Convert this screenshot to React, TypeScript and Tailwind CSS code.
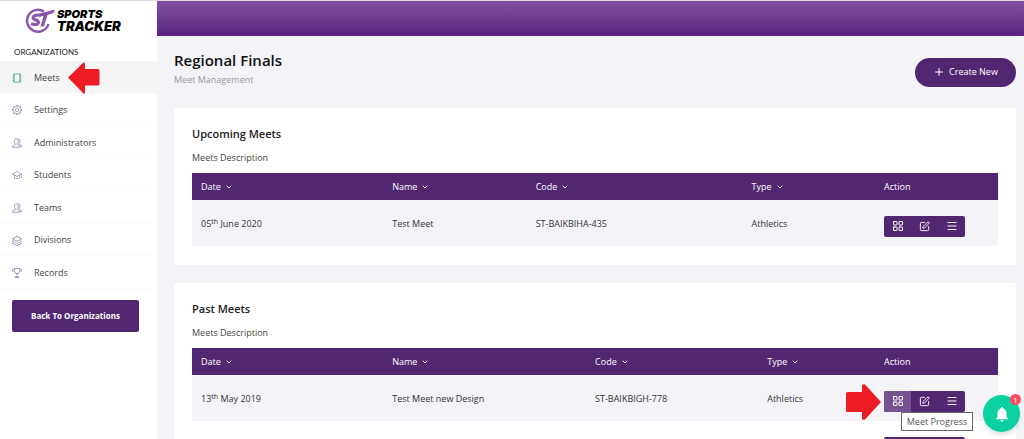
import type { ReactNode } from 'react'
import { ChevronDown, LayoutGrid, Menu, Plus, SquarePen } from 'lucide-react'
import { MdNotifications } from 'react-icons/md'
import { SlGraduation, SlLayers, SlSettings, SlTrophy } from 'react-icons/sl'

interface Meet {
  day: string
  suffix: string
  rest: string
  name: string
  code: string
  type: string
}

interface MeetsCardProps {
  title: string
  meets: Meet[]
  columns: string[]
  children?: ReactNode
}

const upcomingMeets: Meet[] = [
  { day: '05', suffix: 'th', rest: 'June 2020', name: 'Test Meet', code: 'ST-BAIKBIHA-435', type: 'Athletics' },
]

const pastMeets: Meet[] = [
  { day: '13', suffix: 'th', rest: 'May 2019', name: 'Test Meet new Design', code: 'ST-BAIKBIGH-778', type: 'Athletics' },
]

function NotebookIcon() {
  return (
    <svg viewBox="0 0 16 16" className="size-[10px]" fill="none" stroke="currentColor">
      <path d="M3 1.5h10M3 14.5h10" strokeWidth="1.4" />
      <path d="M3 1v14M13 1v14" strokeWidth="2" />
      <path d="M1 4h3M1 8h3M1 12h3M12 4h3M12 8h3M12 12h3" strokeWidth="1" />
    </svg>
  )
}

function PeopleIcon() {
  return (
    <svg viewBox="0 0 20 20" className="size-[10px]" fill="none" stroke="currentColor" strokeWidth="1.5" strokeLinejoin="round">
      <path d="M1 18.5h14v-2c0-1.500-3.500-2-4.500-3.200v-2c1.200-1 1.700-2.500 1.700-5C12.200 3 10.800 1.500 8.500 1.500S4.800 3 4.800 6.300c0 2.500.5 4 1.700 5v2C5.500 14.500 1 15 1 16.500z" />
      <path d="M12 1.500c2.500 0 3.800 1.500 3.800 4.500 0 2.300-.6 3.800-1.600 4.700v1.800c1 1.200 4.800 1.700 4.800 3.500v1h-3" />
    </svg>
  )
}

const menuItems = [
  { label: 'Meets', icon: <NotebookIcon />, active: true },
  { label: 'Settings', icon: <SlSettings /> },
  { label: 'Administrators', icon: <PeopleIcon /> },
  { label: 'Students', icon: <SlGraduation /> },
  { label: 'Teams', icon: <PeopleIcon /> },
  { label: 'Divisions', icon: <SlLayers /> },
  { label: 'Records', icon: <SlTrophy /> },
]

function Logo() {
  return (
    <a href="#" className="flex h-9 items-center pt-1 pl-6">
      <svg viewBox="0 0 32 28" className="h-7 w-8" fill="none">
        <path d="M20 4.500A11 11 0 1 0 24.500 17" stroke="#8b55ad" strokeWidth="2.400" />
        <path d="M17 8.500c-3-1-7.500-.5-8 2-.5 2.800 6 2.200 5.500 5-.5 2.600-5 2.300-7.500 1.200" stroke="#8b55ad" strokeWidth="3" />
        <path d="M15.500 6.500 31 2.500l-1.500 3.500-6 2L20 19.500h-3.500l3-10.500-4 .5z" fill="#8b55ad" />
      </svg>
      <span className="flex flex-col pl-px font-[Inter,sans-serif] font-black text-black italic">
        <span className="text-[11px] leading-[11px]">SPORTS</span>
        <span className="text-[13px] leading-[13px]">TRACKER</span>
      </span>
    </a>
  )
}

function Sidebar() {
  return (
    <aside className="w-[157px] shrink-0 bg-white">
      <Logo />
      <h2 className="mt-[6px] px-[14px] font-[Lato,sans-serif] text-[8px] leading-[18px] text-[#222]">ORGANIZATIONS</h2>
      <nav>
        <ul className="grid h-[228px] auto-rows-fr">
          {menuItems.map((item) => (
            <li key={item.label} className="border-b border-[#fafafa]">
              <a
                href="#"
                className={`flex h-full items-center gap-3 pl-3 text-[10px] ${item.active ? 'bg-[#f5f5f5]' : ''}`}
              >
                <span className={`pt-[2px] ${item.active ? 'text-[#4dba87]' : 'text-[#8377a8]'}`}>{item.icon}</span>
                <span className="pt-px text-[9px] text-[#444]">{item.label}</span>
              </a>
            </li>
          ))}
        </ul>
      </nav>
      <div className="px-3 pt-[11px]">
        <button type="button" className="h-8 w-[127px] rounded-[2px] bg-[#512772] text-[8px] font-bold text-white">
          Back To Organizations
        </button>
      </div>
    </aside>
  )
}

function ActionButtons({ hovered = false }: { hovered?: boolean }) {
  return (
    <div className="flex h-[21px] w-[81px] overflow-hidden rounded-[2px] bg-[#512772] text-white">
      <button
        type="button"
        aria-label="Meet Progress"
        className={`flex flex-1 items-center justify-center ${hovered ? 'bg-[#745390]' : ''}`}
      >
        <LayoutGrid className="size-3" />
      </button>
      <button type="button" aria-label="Edit" className="flex flex-1 items-center justify-center">
        <SquarePen className="size-[11px]" />
      </button>
      <button type="button" aria-label="More" className="flex flex-1 items-center justify-center">
        <Menu className="size-3" />
      </button>
    </div>
  )
}

function MeetsCard({ title, meets, columns, children }: MeetsCardProps) {
  return (
    <section className="bg-white px-[18px] pt-[17px] pb-[19px]">
      <h2 className="text-[11px] leading-[18px] font-semibold text-[#222]">{title}</h2>
      <p className="mt-2 text-[9px] leading-[14px] text-[#444]">Meets Description</p>
      <table className="mt-2 w-full table-fixed text-left text-[9px]">
        <colgroup>
          {columns.map((width, index) => (
            <col key={index} className={width} />
          ))}
          <col className="w-[123px]" />
        </colgroup>
        <thead>
          <tr className="h-[27px] bg-[#512772] text-white">
            {['Date', 'Name', 'Code', 'Type'].map((heading) => (
              <th key={heading} className="px-[9px] font-medium">
                <span className="flex items-center gap-1">
                  {heading}
                  <ChevronDown className="size-2" strokeWidth={3} />
                </span>
              </th>
            ))}
            <th className="px-[9px] font-medium">Action</th>
          </tr>
        </thead>
        <tbody>
          {meets.map((meet) => (
            <tr key={meet.code} className="h-[46px] bg-[#f4f3f8] text-[#333]">
              <td className="px-[9px] pt-[2px]">
                {meet.day}
                <sup className="text-[7px]">{meet.suffix}</sup> {meet.rest}
              </td>
              <td className="px-[9px] pt-[2px]">{meet.name}</td>
              <td className="px-[9px] pt-[2px]">{meet.code}</td>
              <td className="px-[9px] pt-[2px]">{meet.type}</td>
              <td className="px-[9px] pt-[6px]">
                <ActionButtons hovered={title === 'Past Meets'} />
              </td>
            </tr>
          ))}
          {children}
        </tbody>
      </table>
    </section>
  )
}

export default function App() {
  return (
    <div className="relative flex h-screen overflow-hidden border-t border-[#dcdade] bg-[#f4f3f8] font-['Open_Sans',sans-serif]">
      <Sidebar />

      <div className="min-w-0 flex-1">
        <header className="h-[35px] bg-linear-to-b from-[#8150a0] to-[#5a2480]" />

        <main className="pr-2 pl-[17px]">
          <div className="flex h-[72px] items-center justify-between">
            <div className="pb-[6px]">
              <h1 className="text-[15px] leading-5 font-semibold text-[#111]">Regional Finals</h1>
              <p className="mt-[2px] text-[9px] leading-4 text-[#999]">Meet Management</p>
            </div>
            <button
              type="button"
              className="flex h-[29px] w-[101px] items-center justify-center gap-1 rounded-full bg-[#512772] text-[9px] font-medium text-white"
            >
              <Plus className="size-3" />
              Create New
            </button>
          </div>

          <div className="flex flex-col gap-[18px]">
            <MeetsCard title="Upcoming Meets" meets={upcomingMeets} columns={['w-[28%]', 'w-[21%]', 'w-[31.6%]', 'w-[19.4%]']} />
            <MeetsCard title="Past Meets" meets={pastMeets} columns={['w-[28%]', 'w-[29.7%]', 'w-[25.2%]', 'w-[17.1%]']}>
              <tr className="h-[46px]">
                <td colSpan={4} />
                <td className="px-[9px] pt-[6px]">
                  <ActionButtons />
                </td>
              </tr>
            </MeetsCard>
          </div>
        </main>
      </div>

      {/* Pointer arrows */}
      <svg viewBox="0 0 32 32" className="absolute top-[61px] left-[68px] size-8 text-[#ed1c24]" fill="currentColor">
        <path d="M0 15.500 15.500.5Q17 0 17 2v5h13q1.500 0 1.500 1.500v13.500q0 1.500-1.500 1.500H17v7q0 2-1.500 1z" />
      </svg>
      <svg viewBox="0 0 35 36" className="absolute top-[383px] right-[143px] h-9 w-[35px] text-[#ed1c24]" fill="currentColor">
        <path d="M35 18 19 35.500q-3 1-3-1V28H1.500Q0 28 0 26.500v-17Q0 8 1.500 8H16V2q0-2.500 3-1.500z" />
      </svg>

      {/* Tooltip */}
      <div
        role="tooltip"
        className="absolute top-[411px] right-[51px] flex h-[19px] w-[72px] items-center justify-center border border-[#666] bg-white text-[9px] whitespace-nowrap text-[#555]"
      >
        Meet Progress
      </div>

      {/* Notifications */}
      <button
        type="button"
        aria-label="Notifications"
        className="absolute top-[394px] right-1 flex size-[37px] items-center justify-center rounded-full bg-[#0bd1a0] text-white shadow-md"
      >
        <MdNotifications className="size-[18px]" />
        <span className="absolute -top-px -right-px flex size-[11px] items-center justify-center rounded-full bg-[#fb4f5b] text-[8px]">
          1
        </span>
      </button>
    </div>
  )
}
